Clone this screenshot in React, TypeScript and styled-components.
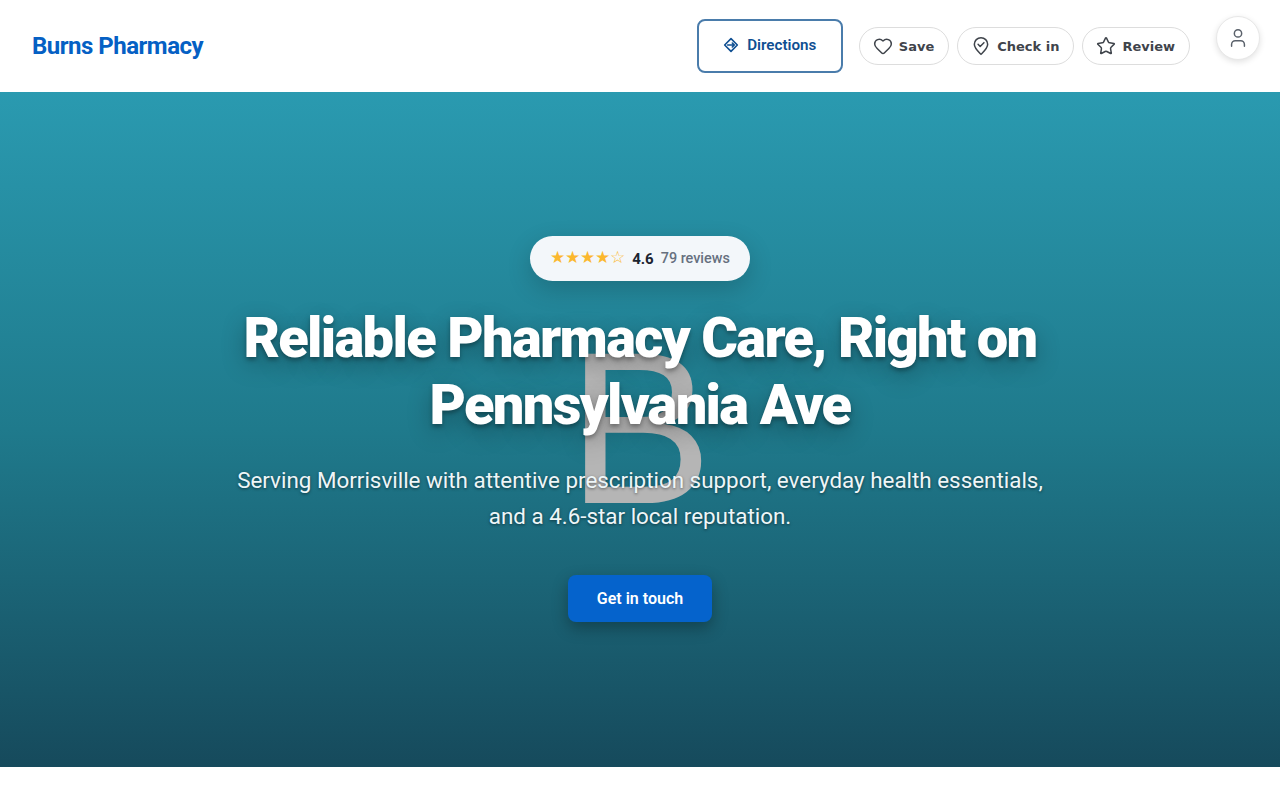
import React from 'react';
import styled, { createGlobalStyle } from 'styled-components';
import { Heart, User, Star } from 'lucide-react';

const GlobalStyle = createGlobalStyle`
  * { box-sizing: border-box; }
  body {
    margin: 0;
    background: #ffffff;
    font-family: "DejaVu Sans", sans-serif;
  }
`;

const Header = styled.header`
  display: flex;
  align-items: center;
  justify-content: space-between;
  height: 92px;
  padding: 0 90px 0 32px;
  background: #ffffff;
`;

const Brand = styled.div`
  font-family: Roboto, sans-serif;
  font-size: 24px;
  font-weight: 700;
  letter-spacing: -0.5px;
  color: #0560c4;
`;

const Actions = styled.nav`
  display: flex;
  align-items: center;
  gap: 8px;
`;

const DirectionsButton = styled.a`
  display: flex;
  align-items: center;
  justify-content: center;
  gap: 8px;
  width: 146px;
  height: 54px;
  margin-right: 8px;
  padding-bottom: 2px;
  border: 2px solid #4a7cab;
  border-radius: 8px;
  font-family: Roboto, sans-serif;
  font-size: 15.2px;
  font-weight: 600;
  color: #0f4f92;
`;

const PillButton = styled.a`
  display: flex;
  align-items: center;
  gap: 7px;
  height: 38px;
  padding: 0 14px;
  border: 1px solid #dddddd;
  border-radius: 19px;
  font-size: 13px;
  font-weight: 700;
  color: #3f444b;

  svg {
    flex: none;
    margin: -1px;
  }
`;

const Account = styled.button`
  position: absolute;
  top: 16px;
  right: 20px;
  display: flex;
  align-items: center;
  justify-content: center;
  width: 44px;
  height: 44px;
  padding: 0;
  border: 1px solid #e8e8e8;
  border-radius: 50%;
  background: #ffffff;
  box-shadow: 0 2px 6px rgba(0, 0, 0, 0.12);
  color: #5a616b;
`;

const Hero = styled.section`
  position: relative;
  display: flex;
  flex-direction: column;
  align-items: center;
  height: 675px;
  padding-top: 144px;
  background: linear-gradient(180deg, #2a9ab0 0%, #1f7a8c 50%, #164a5c 100%);
  overflow: hidden;
`;

const Monogram = styled.div`
  position: absolute;
  top: 227px;
  left: 0;
  right: 0;
  text-align: center;
  font-family: "Liberation Sans", sans-serif;
  font-size: 218px;
  line-height: 1;
  color: #b5b5b5;
`;

const RatingPill = styled.div`
  position: relative;
  display: flex;
  align-items: center;
  height: 45px;
  padding: 0 20px;
  border-radius: 23px;
  background: #f3f7fa;
  box-shadow: 0 8px 24px rgba(0, 0, 0, 0.18);
  font-family: Roboto, sans-serif;
`;

const Stars = styled.span`
  display: flex;
  margin-right: 7px;
  padding-bottom: 3px;
  font-size: 16.7px;
  color: #fbb82e;
`;

const Score = styled.strong`
  margin-right: 7px;
  font-size: 15px;
  font-weight: 700;
  color: #1b2430;
`;

const Reviews = styled.span`
  font-size: 14.4px;
  font-weight: 500;
  color: #66707f;
`;

const Title = styled.h1`
  position: relative;
  margin: 24px 0 0;
  width: 900px;
  text-align: center;
  font-family: Roboto, sans-serif;
  font-size: 56px;
  font-weight: 900;
  line-height: 67px;
  letter-spacing: -1.68px;
  color: #ffffff;
  text-shadow: 0 3px 4px rgba(0, 0, 0, 0.3), 0 8px 24px rgba(0, 0, 0, 0.3);
`;

const Lead = styled.p`
  position: relative;
  margin: 23px 0 0;
  width: 840px;
  text-align: center;
  font-family: Roboto, sans-serif;
  font-size: 22.4px;
  line-height: 36px;
  color: #eef6f8;
  text-shadow: 0 1px 3px rgba(0, 0, 0, 0.5);
`;

const Cta = styled.a`
  position: relative;
  display: flex;
  align-items: center;
  justify-content: center;
  width: 144px;
  height: 47px;
  margin-top: 41px;
  border-radius: 8px;
  background: #0563cc;
  box-shadow: 0 6px 16px rgba(0, 0, 0, 0.3);
  font-family: Roboto, sans-serif;
  font-size: 16px;
  font-weight: 600;
  color: #ffffff;
`;

const DirectionsIcon = () => (
  <svg width="16" height="16" viewBox="0 0 24 24" fill="none" stroke="currentColor" strokeWidth="2.4" strokeLinejoin="round">
    <path d="M12 2.500 21.500 12 12 21.500 2.500 12Z" />
    <path d="M7 12h10M14 9l3 3-3 3" strokeLinecap="round" />
  </svg>
);

const CheckInIcon = () => (
  <svg width="20" height="20" viewBox="0 0 24 24" fill="none" stroke="currentColor" strokeWidth="1.8" strokeLinecap="round" strokeLinejoin="round">
    <path d="M20 10c0 5-5.500 9.500-8 12-2.500-2.500-8-7-8-12a8 8 0 0 1 16 0Z" />
    <path d="m8.500 10 2.500 2.500 4.500-4.500" />
  </svg>
);

export default function App() {
  return (
    <>
      <GlobalStyle />
      <Header>
        <Brand>Burns Pharmacy</Brand>
        <Actions>
          <DirectionsButton><DirectionsIcon />Directions</DirectionsButton>
          <PillButton><Heart size={20} strokeWidth={1.8} />Save</PillButton>
          <PillButton><CheckInIcon />Check in</PillButton>
          <PillButton><Star size={20} strokeWidth={1.8} />Review</PillButton>
        </Actions>
        <Account><User size={22} strokeWidth={1.6} /></Account>
      </Header>
      <Hero>
        <Monogram>B</Monogram>
        <RatingPill>
          <Stars>★★★★☆</Stars>
          <Score>4.6</Score>
          <Reviews>79 reviews</Reviews>
        </RatingPill>
        <Title>Reliable Pharmacy Care, Right on Pennsylvania Ave</Title>
        <Lead>Serving Morrisville with attentive prescription support, everyday health essentials, and a 4.6-star local reputation.</Lead>
        <Cta>Get in touch</Cta>
      </Hero>
    </>
  );
}
